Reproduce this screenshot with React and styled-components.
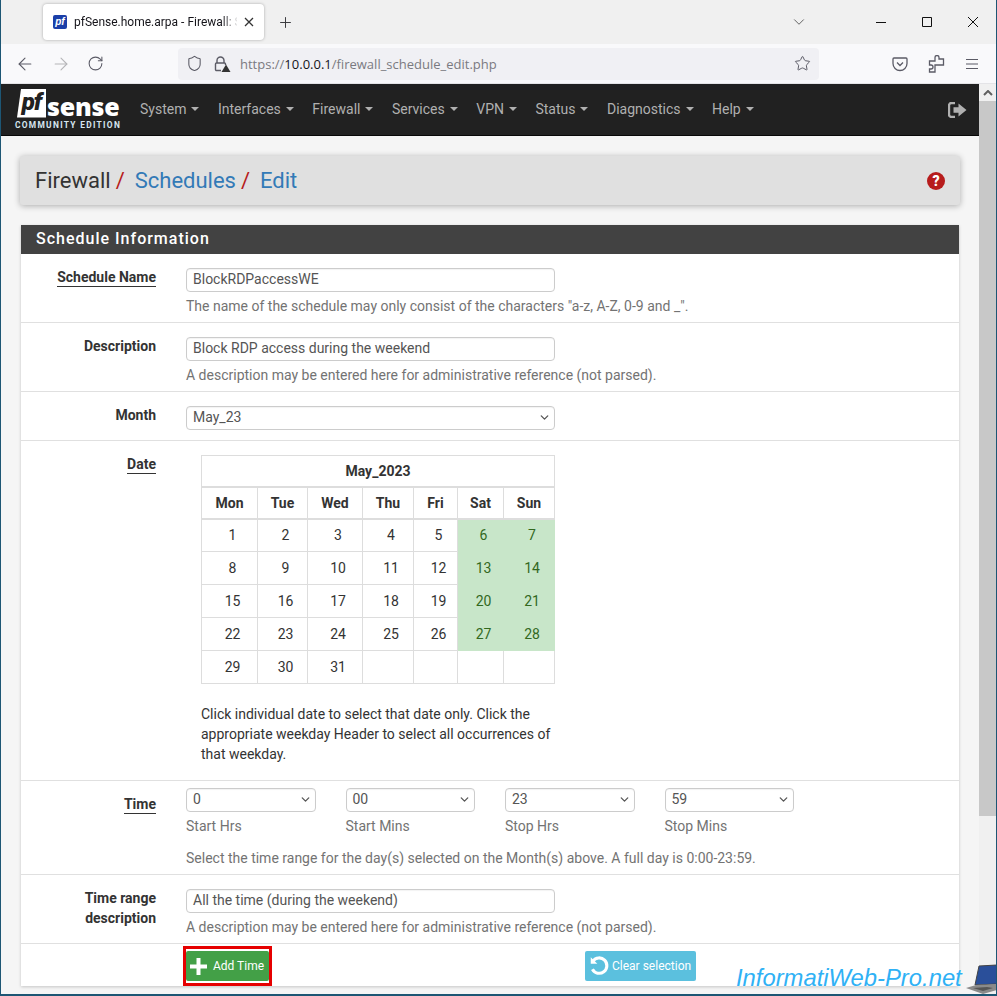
import React from "react";
import styled, { createGlobalStyle } from "styled-components";
import { ChevronDown, Plus, ArrowLeft, ArrowRight, RotateCw, Shield, Star } from "lucide-react";

const Global = createGlobalStyle`
  html, body { margin: 0; padding: 0; background: #fff; }
  * { box-sizing: border-box; }
  body { font-family: Roboto, "Liberation Sans", sans-serif; font-size: 14px; color: #333; }
`;
const Win = styled.div`
  position: relative; width: 997px; height: 996px; overflow: hidden; display: flex; flex-direction: column;
  border-left: 1px solid #1d5674; border-right: 1px solid #1d5674; border-bottom: 2px solid #1d5674;
  background: #f5f5f5;
`;
const TabStrip = styled.div`height: 44px; background: #f0f0f0; display: flex; align-items: center; padding-left: 42px; flex: none;`;
const Tab = styled.div`
  width: 221px; height: 36px; background: #fff; border-radius: 4px; box-shadow: 0 0 3px rgba(0,0,0,.3);
  display: flex; align-items: center; padding: 0 10px; gap: 7px; flex: none;
`;
const Favicon = styled.span`
  width: 14px; height: 14px; background: #1b3fa8; color: #fff; font: italic bold 10px/14px "Liberation Sans", sans-serif;
  text-align: center; flex: none; border-radius: 2px;
`;
const TabTitle = styled.span`
  font: 12px/18px Roboto, "Liberation Sans", sans-serif; color: #15141a; white-space: nowrap; width: 163px; flex: none;
  -webkit-mask-image: linear-gradient(to right, #000 148px, transparent 165px);
`;
const NewTab = styled.span`margin-left: 13px; display: flex; color: #3c3c40;`;
const Spacer = styled.div`flex: 1;`;
const WinCtrl = styled.div`display: flex; align-items: center; color: #111;`;
const WinBtn = styled.span`width: 46px; display: flex; justify-content: center;`;
const ListCaret = styled.span`display: flex; color: #555; margin-right: 50px;`;
const Toolbar = styled.div`height: 40px; background: #f9f9fb; display: flex; align-items: center; padding-left: 14px; flex: none; border-bottom: 1px solid #e4e4e7;`;
const NavBtn = styled.span`width: 36px; display: flex; color: ${p => p.$off ? "#b5b5b8" : "#5b5b66"};`;
const UrlBar = styled.div`
  width: 641px; height: 32px; margin-left: 55px; background: #f0f0f4; border-radius: 4px; display: flex; align-items: center; padding-left: 8px; color: #5b5b66; flex: none;
`;
const LockWrap = styled.span`display: flex; margin-left: 10px; margin-right: 9px;`;
const UrlText = styled.span`font: 13px "Open Sans", "Liberation Sans", sans-serif; color: #7a7a80; b { font-weight: 400; color: #15141a; }`;
const UrlStar = styled.span`margin-left: auto; margin-right: 8px; display: flex;`;
const ToolIcons = styled.div`display: flex; margin-left: 73px; gap: 20px; color: #5b5b66; align-items: center;`;
const Body = styled.div`flex: 1; display: flex; min-height: 0;`;
const Page = styled.div`flex: 1; min-width: 0; display: flex; flex-direction: column;`;
const Scrollbar = styled.div`width: 17px; flex: none; background: #f0f0f0; display: flex; flex-direction: column;`;
const ScrollUp = styled.div`height: 17px; display: flex; align-items: center; justify-content: center; color: #606060;`;
const Thumb = styled.div`height: 715px; background: #c8c8c8;`;
const NavBar = styled.nav`
  height: 52px; background: #212121; border-bottom: 1px solid #080808; display: flex; flex: none; padding-left: 14px; padding-right: 12px; align-items: center;
`;
const Logo = styled.div`width: 107px; flex: none; display: flex; flex-direction: column; margin-top: -1px;`;
const LogoTop = styled.div`display: flex; align-items: flex-end; height: 29px; padding-left: 2px;`;
const PfBox = styled.span`
  width: 29px; height: 29px; background: #fff; color: #212121; font: italic 900 24px/26px Roboto, sans-serif; text-align: center;
  clip-path: polygon(14% 0, 100% 0, 100% 100%, 0 100%); letter-spacing: -1px; flex: none;
`;
const Sense = styled.span`color: #fff; font: 900 25px/23px "Open Sans", sans-serif; margin-left: 1px; letter-spacing: -.2px;`;
const LogoSub = styled.div`color: #d8e6f0; font: 700 8.4px/10px Roboto, sans-serif; letter-spacing: 1.3px; white-space: nowrap; margin-top: 2px;`;
const NavItems = styled.div`display: flex; margin-left: 18px; gap: 18.5px; flex: 1; margin-top: -2px;`;
const NavItem = styled.span`
  color: #b0b0b0; font-size: 14px; display: flex; align-items: center; gap: 5px; white-space: nowrap;
  &::after { content: ""; border-top: 4px solid #b0b0b0; border-left: 4px solid transparent; border-right: 4px solid transparent; }
`;
const Content = styled.div`flex: 1; padding: 20px 20px 0 20px; display: flex; flex-direction: column; min-height: 0;`;
const Crumb = styled.div`
  height: 49px; background: #e0e0e0; border-radius: 3px; box-shadow: 0 1px 6px rgba(0,0,0,.3); display: flex; align-items: center; padding: 0 15px;
  margin-left: -1px; margin-right: -1px; flex: none; font-size: 22px; white-space: nowrap;
`;
const CrumbLink = styled.span`color: ${p => p.$link ? "#337ab7" : "#333"};`;
const Sep = styled.span`color: #b71c1c; margin-left: 5px; margin-right: 10px;`;
const Help = styled.svg`margin-left: auto;`;
const Panel = styled.section`
  margin-top: 20px; flex: none; background: #fff; box-shadow: 0 1px 3px rgba(0,0,0,.2);
`;
const PanelHead = styled.h2`
  margin: 0; height: 29px; background: #424242; color: #fff; font-size: 16px; font-weight: 500; letter-spacing: 1px; line-height: 28px; padding-left: 15px;
`;
const Row = styled.div`
  display: grid; grid-template-columns: 135px 1fr; column-gap: 30px; border-bottom: 1px solid #e0e0e0; padding-top: ${p => p.$pt || 14}px; height: ${p => p.$h}px;
`;
const Label = styled.div`
  text-align: right; font-weight: 700; font-size: 14px; line-height: 20px; color: #333; margin-top: ${p => p.$mt ?? -1}px;
`;
const Under = styled.span`border-bottom: 1px solid #333; padding-bottom: 1px;`;
const Field = styled.div`display: flex; flex-direction: column; min-width: 0;`;
const Input = styled.div`
  width: 369px; height: 24px; border: 1px solid #ccc; border-radius: 4px; background: #fff; padding: 0 3px 2px 6px; font-size: 14px; line-height: 20px; color: #555;
  box-shadow: inset 0 1px 1px rgba(0,0,0,.05); display: flex; justify-content: space-between; align-items: center; flex: none;
`;
const HelpText = styled.div`color: #737373; font-size: 14px; line-height: 20px; margin-top: ${p => p.$mt || 4}px; white-space: nowrap;`;
const Table = styled.table`
  width: 353px; margin: 0 0 0 15px; border-collapse: collapse; table-layout: fixed; font-size: 14px; color: #333; text-align: center;
  th, td { border: 1px solid #ddd; padding: 0; }
  thead th { border-bottom-width: 2px; height: 31px; font-weight: 700; }
  thead tr:last-child th { height: 32px; }
  td { height: 33px; padding-left: 6px; }
`;
const Col = styled.col`width: ${p => p.$w}px;`;
const Day = styled.td`background: ${p => p.$on ? "#c8e6c9" : "#fff"}; color: ${p => p.$on ? "#33691e" : "#333"}; border-color: ${p => p.$on ? "#c8e6c9" : "#ddd"} !important;`;
const CalNote = styled.p`width: 360px; margin: 20px 0 0 15px; line-height: 20px; color: #333; font-size: 14px;`;
const TimeGrid = styled.div`display: flex; gap: 30px;`;
const TimeCol = styled.div`width: 129.5px; display: flex; flex-direction: column;`;
const TimeSelect = styled(Input)`width: 100%;`;
const TimeLabel = styled.div`color: #737373; line-height: 20px; margin-top: 4px;`;
const Buttons = styled.div`display: flex; padding-left: 162px; padding-top: 2px; height: 42px;`;
const RedFrame = styled.div`border: 3px solid #e60000; padding: 2px 0; height: 40px; flex: none;`;
const AddBtn = styled.div`
  width: 83px; height: 30px; background: #43a047; border-radius: 2px; color: #fff; font-size: 12px; display: flex; align-items: center; gap: 5px; padding-left: 3px;
`;
const ClearBtn = styled.div`
  width: 111px; height: 30px; margin-top: 5px; margin-left: 313px; background: #5bc0de; border-radius: 2px; color: #fff; font-size: 12px; display: flex; align-items: center; gap: 2px; padding-left: 3px; flex: none;
`;
const Watermark = styled.div`
  position: absolute; left: 735px; top: 963px; color: #2fb1f5; font: italic 23.8px/30px "Liberation Sans", sans-serif; white-space: nowrap; text-shadow: 0 0 2px #fff;
`;
const Laptop = styled.svg`position: absolute; left: 963px; top: 964px;`;

const Caret = () => <ChevronDown size={13} strokeWidth={2.4} color="#555" />;
const weeks = [[1,2,3,4,5,6,7],[8,9,10,11,12,13,14],[15,16,17,18,19,20,21],[22,23,24,25,26,27,28],[29,30,31,"","","",""]];
const days = ["Mon","Tue","Wed","Thu","Fri","Sat","Sun"];
const widths = [56,50,55,51,44,46,51];
const times = [["0","Start Hrs"],["00","Start Mins"],["23","Stop Hrs"],["59","Stop Mins"]];

const Line = ({ d, size = 10, w = 1 }) => (
  <svg width={size} height={size} viewBox={`0 0 ${size} ${size}`} fill="none" stroke="currentColor" strokeWidth={w}><path d={d} /></svg>
);

export default function App() {
  return (
    <Win>
      <Global />
      <TabStrip>
        <Tab>
          <Favicon>pf</Favicon>
          <TabTitle>pfSense.home.arpa - Firewall: Sc</TabTitle>
          <Line d="M1 1l8 8M9 1l-8 8" w={1.3} />
        </Tab>
        <NewTab><Plus size={17} strokeWidth={1.4} /></NewTab>
        <Spacer />
        <ListCaret><ChevronDown size={18} strokeWidth={1.2} /></ListCaret>
        <WinCtrl>
          <WinBtn><Line d="M0 5.5h10" /></WinBtn>
          <WinBtn><Line d="M.5.5h9v9h-9z" /></WinBtn>
          <WinBtn><Line d="M0 0l10 10M10 0L0 10" /></WinBtn>
        </WinCtrl>
      </TabStrip>
      <Toolbar>
        <NavBtn><ArrowLeft size={20} strokeWidth={1.3} /></NavBtn>
        <NavBtn $off><ArrowRight size={20} strokeWidth={1.3} /></NavBtn>
        <NavBtn><RotateCw size={17} strokeWidth={1.5} /></NavBtn>
        <UrlBar>
          <Shield size={17} strokeWidth={1.5} />
          <LockWrap>
            <svg width="18" height="18" viewBox="0 0 18 18" fill="none" stroke="currentColor" strokeWidth="1.4">
              <path d="M4 8V5.5a3.5 3.5 0 0 1 7 0V8" />
              <path d="M8 15.5H3.5a1 1 0 0 1-1-1V9a1 1 0 0 1 1-1h8a1 1 0 0 1 1 1v1" />
              <path d="M13 9.5l4.5 7.5h-9z" fill="#333" stroke="none" />
            </svg>
          </LockWrap>
          <UrlText>https://<b>10.0.0.1</b>/firewall_schedule_edit.php</UrlText>
          <UrlStar><Star size={17} strokeWidth={1.4} /></UrlStar>
        </UrlBar>
        <ToolIcons>
          <svg width="16" height="16" viewBox="0 0 16 16" fill="none" stroke="currentColor" strokeWidth="1.3">
            <path d="M2 2h12a1 1 0 0 1 1 1v4.5a7 7 0 0 1-14 0V3a1 1 0 0 1 1-1z" />
            <path d="M5 6.5l3 3 3-3" />
          </svg>
          <svg width="17" height="18" viewBox="0 0 17 18" fill="none" stroke="currentColor" strokeWidth="1.3">
            <path d="M7 3V2.5a2 2 0 0 1 4 0V4h4.5v6H7v7H1.5v-3H3a2 2 0 0 0 0-4H1.5V6H7z" />
          </svg>
          <svg width="14" height="12" viewBox="0 0 14 12" fill="none" stroke="currentColor" strokeWidth="1.2">
            <path d="M1 1.5h12M1 6h12M1 10.5h12" />
          </svg>
        </ToolIcons>
      </Toolbar>
      <Body>
        <Page>
          <NavBar>
            <Logo>
              <LogoTop><PfBox>pf</PfBox><Sense>sense</Sense></LogoTop>
              <LogoSub>COMMUNITY EDITION</LogoSub>
            </Logo>
            <NavItems>
              {["System","Interfaces","Firewall","Services","VPN","Status","Diagnostics","Help"].map(n => <NavItem key={n}>{n}</NavItem>)}
            </NavItems>
            <svg width="19" height="16" viewBox="0 0 19 16">
              <path d="M7 1H3.5A2.5 2.5 0 0 0 1 3.5v9A2.5 2.5 0 0 0 3.5 15H7" fill="none" stroke="#b0b0b0" strokeWidth="2.4" />
              <path d="M5.5 5.3h5V1.5L18.5 8l-8 6.5v-3.8h-5z" fill="#b0b0b0" />
            </svg>
          </NavBar>
          <Content>
            <Crumb>
              <CrumbLink>Firewall</CrumbLink><Sep>/</Sep>
              <CrumbLink $link>Schedules</CrumbLink><Sep>/</Sep>
              <CrumbLink $link>Edit</CrumbLink>
              <Help width="18" height="18" viewBox="0 0 18 18">
                <circle cx="9" cy="9" r="9" fill="#b71c1c" />
                <text x="9" y="14" textAnchor="middle" fontSize="14" fontWeight="900" fontFamily="Roboto" fill="#fff">?</text>
              </Help>
            </Crumb>
            <Panel>
              <PanelHead>Schedule Information</PanelHead>
              <Row $h={69}>
                <Label><Under>Schedule Name</Under></Label>
                <Field><Input>BlockRDPaccessWE</Input><HelpText>The name of the schedule may only consist of the characters "a-z, A-Z, 0-9 and _".</HelpText></Field>
              </Row>
              <Row $h={69}>
                <Label>Description</Label>
                <Field><Input>Block RDP access during the weekend</Input><HelpText>A description may be entered here for administrative reference (not parsed).</HelpText></Field>
              </Row>
              <Row $h={49}>
                <Label>Month</Label>
                <Field><Input>May_23<Caret /></Input></Field>
              </Row>
              <Row $h={340}>
                <Label><Under>Date</Under></Label>
                <Field>
                  <Table>
                    <colgroup>{widths.map((w, i) => <Col key={i} $w={w} />)}</colgroup>
                    <thead>
                      <tr><th colSpan={7}>May_2023</th></tr>
                      <tr>{days.map(d => <th key={d}>{d}</th>)}</tr>
                    </thead>
                    <tbody>
                      {weeks.map((w, i) => (
                        <tr key={i}>{w.map((d, j) => <Day key={j} $on={j >= 5 && d !== ""}>{d}</Day>)}</tr>
                      ))}
                    </tbody>
                  </Table>
                  <CalNote>Click individual date to select that date only. Click the appropriate weekday Header to select all occurrences of that weekday.</CalNote>
                </Field>
              </Row>
              <Row $h={94} $pt={7}>
                <Label $mt={6}><Under>Time</Under></Label>
                <Field>
                  <TimeGrid>
                    {times.map(([v, l]) => (
                      <TimeCol key={l}><TimeSelect>{v}<Caret /></TimeSelect><TimeLabel>{l}</TimeLabel></TimeCol>
                    ))}
                  </TimeGrid>
                  <HelpText $mt={12}>Select the time range for the day(s) selected on the Month(s) above. A full day is 0:00-23:59.</HelpText>
                </Field>
              </Row>
              <Row $h={69}>
                <Label>Time range<br />description</Label>
                <Field><Input>All the time (during the weekend)</Input><HelpText>A description may be entered here for administrative reference (not parsed).</HelpText></Field>
              </Row>
              <Buttons>
                <RedFrame>
                  <AddBtn>
                    <svg width="19" height="19" viewBox="0 0 19 19"><path d="M7.5 1h4v6.5H18v4h-6.5V18h-4v-6.5H1v-4h6.5z" fill="#fff" /></svg>
                    Add Time
                  </AddBtn>
                </RedFrame>
                <ClearBtn>
                  <svg width="22" height="22" viewBox="0 0 20 20" fill="none" stroke="#fff" strokeWidth="2.8">
                    <path d="M4.5 5.5A7 7 0 1 1 4 13" />
                    <path d="M2.5 2v6h6z" fill="#fff" stroke="none" />
                  </svg>
                  Clear selection
                </ClearBtn>
              </Buttons>
            </Panel>
          </Content>
        </Page>
        <Scrollbar>
          <ScrollUp>
            <svg width="10" height="6" viewBox="0 0 10 6"><path d="M1 5l4-4 4 4" fill="none" stroke="#606060" strokeWidth="2" /></svg>
          </ScrollUp>
          <Thumb />
        </Scrollbar>
      </Body>
      <Watermark>InformatiWeb-Pro.net</Watermark>
      <Laptop width="33" height="30" viewBox="0 0 33 30">
        <path d="M15 2l18-1v19l-22 1z" fill="#2a4f9a" stroke="#444" />
        <path d="M2 24l10-3 21-1v6l-14 4z" fill="#8a8a8a" />
        <path d="M9 24l14-1 6 1-10 3z" fill="#555" />
      </Laptop>
    </Win>
  );
}
